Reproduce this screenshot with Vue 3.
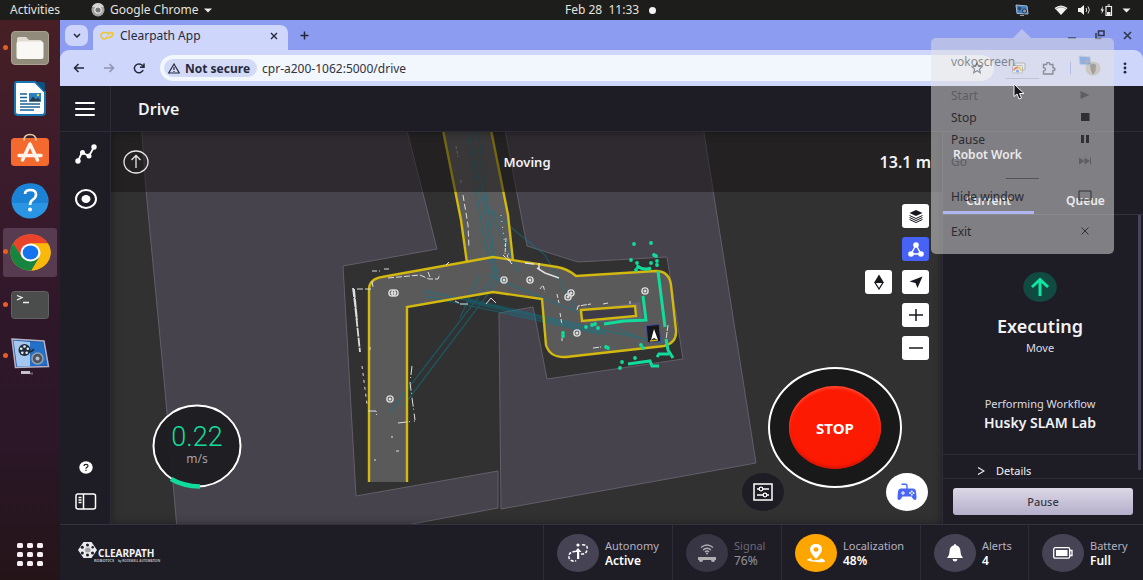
<script setup>
const dots = [
  [504, 280], [530, 280], [568, 297], [571, 293], [577, 333], [645, 291],
  [392, 293], [395, 293], [390, 399]
]
const greenDots = [
  [634, 244], [651, 243], [631, 260], [654, 255], [656, 256], [651, 263], [657, 261],
  [657, 265], [637, 263], [638, 267], [636, 270], [620, 368], [622, 362], [563, 333],
  [563, 336], [635, 358], [641, 345], [643, 348], [606, 347], [608, 348], [586, 327],
  [592, 325], [595, 324], [598, 328]
]
const menu = [
  { label: 'Start', icon: 'play', off: true },
  { label: 'Stop', icon: 'stop' },
  { label: 'Pause', icon: 'pause' },
  { label: 'Go', icon: 'skip', off: true }
]
const stats = [
  { id: 'autonomy', label: 'Autonomy', value: 'Active' },
  { id: 'signal', label: 'Signal', value: '76%' },
  { id: 'localization', label: 'Localization', value: '48%' },
  { id: 'alerts', label: 'Alerts', value: '4' },
  { id: 'battery', label: 'Battery', value: 'Full' }
]
</script>

<template>
  <div class="desktop">
    <header class="topbar">
      <button class="top-btn">Activities</button>
      <button class="top-btn app-menu">
        <svg width="14" height="14" viewBox="0 0 14 14"><circle cx="7" cy="7" r="6.5" fill="#a5a5a3" /><path d="M1 4 A6.5 6.5 0 0 1 13 4 L7 4z" fill="#d2d2d0" /><circle cx="7" cy="7" r="3.2" fill="#777" stroke="#e8e8e8" stroke-width="1.2" /></svg>
        Google Chrome
        <svg width="8" height="5" viewBox="0 0 8 5"><path d="M0 0.5h8L4 4.5z" fill="#eee" /></svg>
      </button>
      <button class="top-btn clock">Feb 28&nbsp; 11:33 <i class="notif"></i></button>
      <div class="tray">
        <svg class="tray-app" width="14" height="13" viewBox="0 0 14 13"><path d="M1 1 12 2 13 10 2 9.500z" fill="#3d7dc4" stroke="#a8bdd4" /><circle cx="4.500" cy="4.500" r="1.700" fill="#2b4766" /><circle cx="9.500" cy="7" r="2" fill="#8d9dad" stroke="#334" /><path d="M5 11.500h4" stroke="#999" /></svg>
        <svg width="14" height="10" viewBox="0 0 14 10"><path d="M7 10 0.500 3 Q7 -2.200 13.500 3z" fill="#f1f1ef" /><path d="M1.600 4.200 Q7 0 12.400 4.200" fill="none" stroke="#777" stroke-width=".6" /></svg>
        <svg width="14" height="12" viewBox="0 0 14 12"><path d="M1 4h2.500L7 1v10L3.500 8H1z" fill="#f1f1ef" /><path d="M9 4q1.500 2 0 4M11 2.500q2.800 3.500 0 7" fill="none" stroke="#ddd" /></svg>
        <svg width="13" height="12" viewBox="0 0 13 12"><path d="M3 2 0.500 6.500H2L1.500 10 4 5.500H2.500z" fill="#eee" /><path d="M6 2.500h5.500v9H6zM7.500 1h2.500" fill="none" stroke="#eee" stroke-width="1.200" /><path d="M7 8h3.500v3H7z" fill="#eee" /></svg>
        <svg width="9" height="5" viewBox="0 0 9 5"><path d="M0.500 0.500h8L4.500 4.500z" fill="#eee" /></svg>
      </div>
    </header>

    <div class="work">
      <nav class="dock" aria-label="Dock">
        <button class="dock-item running" aria-label="Files">
          <svg width="38" height="34" viewBox="0 0 38 34"><rect x=".5" y=".5" width="37" height="33" rx="3.500" fill="#918b7b" stroke="#aaa291" /><path d="M6 8q0-2 2-2h7l3 3h11q2 0 2 2v3H6z" fill="#e0dcd3" /><rect x="5.500" y="10.500" width="27" height="17.500" rx="2" fill="#faf8f4" /></svg>
        </button>
        <button class="dock-item" aria-label="Writer">
          <svg width="32" height="35" viewBox="0 0 32 35"><path d="M3 1h18l10 10v20q0 3-3 3H4q-3 0-3-3V3q0-2 2-2z" fill="#fff" stroke="#1a76b3" stroke-width="2" /><path d="M22 1h7q2 0 2 2v8z" fill="#104f7e" /><path d="M6 13h7M6 16.500h7M6 20h7M6 23h20M6 26h20M6 29h14" stroke="#1b6295" stroke-width="1.400" /><rect x="15" y="12" width="12" height="8.500" fill="#2b82c0" /><path d="M15 20.500l4-5 3 3 2-2 3 4z" fill="#263b4c" /><circle cx="24" cy="14" r="1.200" fill="#f5d35a" /></svg>
        </button>
        <button class="dock-item" aria-label="Software">
          <svg width="38" height="34" viewBox="0 0 38 34"><rect y="5" width="38" height="28" rx="3.500" fill="#f4692e" /><path d="M13 7.500q0-6 6-6t6 6" fill="none" stroke="#e3c9a8" stroke-width="1.600" /><path d="M19 11 11.500 27M19 11l7.500 16M8 22.500h22" stroke="#fff4eb" stroke-width="3.500" stroke-linecap="round" fill="none" /></svg>
        </button>
        <button class="dock-item" aria-label="Help">
          <svg width="38" height="36" viewBox="0 0 38 36"><ellipse cx="19" cy="18" rx="18.500" ry="17.500" fill="#2a95e3" /><path d="M1 20Q1 1 19 .5T37 20z" fill="#1b82d6" /><path d="M14 11q0-4 5.500-4t5.500 4.500q0 3-3 5t-3 5.500" fill="none" stroke="#fff" stroke-width="2.600" /><circle cx="19" cy="26.500" r="2" fill="#fff" /></svg>
        </button>
        <button class="dock-item running active" aria-label="Chrome">
          <svg width="41" height="37" viewBox="0 0 41 37"><ellipse cx="20.500" cy="18.500" rx="20" ry="18" fill="#f9b90c" /><path d="M3.200 9.500A20 18 0 0 1 38 9.500H20.500L12 24z" fill="#e9432c" /><path d="M3.200 9.500A20 18 0 0 0 21.500 36.500L29.500 23H12z" fill="#17843f" /><path d="M29.500 23 21.500 36.500A20 18 0 0 0 38 9.500H20.500z" fill="#f9b90c" /><ellipse cx="20.500" cy="18.500" rx="10" ry="9" fill="#fff" /><ellipse cx="20.500" cy="18.500" rx="7.800" ry="7" fill="#1473ef" /></svg>
        </button>
        <button class="dock-item running" aria-label="Terminal">
          <svg width="38" height="28" viewBox="0 0 38 28"><rect x=".5" y=".5" width="37" height="27" rx="3" fill="#4b4c4c" stroke="#626262" /><path d="M6 4.500 11 6.500 6 9M12 11.500h6" fill="none" stroke="#f0f0f0" stroke-width="1.300" /></svg>
        </button>
        <button class="dock-item running" aria-label="vokoscreen">
          <svg width="40" height="38" viewBox="0 0 40 38"><path d="M2 2 34 4 38.500 29.500 5.500 30.500z" fill="#1c5ba8" stroke="#b5b0c4" stroke-width="1.500" /><path d="M3.500 3.500 20 5v24.500L7 29.500z" fill="#a4c6ef" /><path d="M20 5 33 5.500 37 28 20 29z" fill="#2370c9" /><circle cx="14.500" cy="13" r="6" fill="#222c3a" /><g fill="#e6eef7"><circle cx="14.500" cy="9.500" r="1.300" /><circle cx="11.200" cy="11.700" r="1.300" /><circle cx="12.300" cy="15.700" r="1.300" /><circle cx="16.700" cy="15.700" r="1.300" /><circle cx="17.800" cy="11.700" r="1.300" /></g><path d="M18 15q4 0 6-3" stroke="#222c3a" stroke-width="1.500" fill="none" /><circle cx="27.500" cy="21.500" r="5.500" fill="#4b5560" stroke="#98a0ab" stroke-width="1.500" /><circle cx="27.500" cy="21.500" r="2" fill="#b9c0c8" /><path d="M11 35.500h9" stroke="#c6c2ca" stroke-width="3" /><path d="M20 36.500h3" stroke="#6d6470" stroke-width="2" /></svg>
        </button>
        <button class="dock-item grid-btn" aria-label="Show applications">
          <svg width="26" height="24" viewBox="0 0 26 24" fill="#f5eff4"><template v-for="r in 3" :key="r"><rect v-for="c in 3" :key="c" :x="(c - 1) * 10" :y="(r - 1) * 9" width="6" height="5" rx="1.500" /></template></svg>
        </button>
      </nav>

      <div class="browser">
        <div class="tabstrip">
          <button class="tab-search" aria-label="Search tabs"><svg width="8" height="5" viewBox="0 0 8 5"><path d="M1 1l3 3 3-3" fill="none" stroke="#222739" stroke-width="1.500" /></svg></button>
          <div class="tab">
            <svg width="14" height="10" viewBox="0 0 14 10"><path d="M7 1.500H3.500Q1 2 1 4.500T3.500 8h2l1-1.500h3Q13 6 12.800 2 L10 1.500 8.500 3z" fill="none" stroke="#f0c52d" stroke-width="1.600" /></svg>
            <span>Clearpath App</span>
            <button class="bare" aria-label="Close tab"><svg width="8" height="8" viewBox="0 0 8 8"><path d="M1 1l6 6M7 1 1 7" stroke="#222739" stroke-width="1.400" /></svg></button>
          </div>
          <button class="bare new-tab" aria-label="New tab"><svg width="9" height="9" viewBox="0 0 9 9"><path d="M4.500 0.500v8M.5 4.500h8" stroke="#222739" stroke-width="1.500" /></svg></button>
          <div class="win">
            <button class="bare" aria-label="Minimize"><svg width="10" height="10" viewBox="0 0 10 10"><path d="M1 8h8" stroke="#3d4567" stroke-width="1.500" /></svg></button>
            <button class="bare" aria-label="Restore"><svg width="10" height="10" viewBox="0 0 10 10"><path d="M3.500 1h5.500v4.500H3.500zM1 3v5.500h5.500" fill="none" stroke="#303651" stroke-width="1.500" /></svg></button>
            <button class="bare" aria-label="Close"><svg width="9" height="9" viewBox="0 0 9 9"><path d="M1 1l7 7M8 1 1 8" stroke="#303651" stroke-width="1.600" /></svg></button>
          </div>
        </div>
        <div class="toolbar">
          <button class="bare" aria-label="Back"><svg width="12" height="10" viewBox="0 0 12 10"><path d="M11 5H1.500M5.500 1l-4 4 4 4" fill="none" stroke="#222739" stroke-width="1.500" /></svg></button>
          <button class="bare" aria-label="Forward"><svg width="12" height="10" viewBox="0 0 12 10"><path d="M1 5h9.500M6.500 1l4 4-4 4" fill="none" stroke="#8e94ae" stroke-width="1.500" /></svg></button>
          <button class="bare" aria-label="Reload"><svg width="12" height="11" viewBox="0 0 12 11"><path d="M10.200 7A4.600 4.400 0 1 1 9.500 2.500L10.800 4M11 .5V4.200H7" fill="none" stroke="#222739" stroke-width="1.500" /></svg></button>
          <div class="omnibox">
            <button class="chip"><svg width="12" height="11" viewBox="0 0 12 11"><path d="M6 1 11.300 10H.7z" fill="none" stroke="#252a3f" stroke-width="1.200" /><path d="M6 4v3M6 8v1" stroke="#252a3f" stroke-width="1.200" /></svg>Not secure</button>
            <input aria-label="Address" value="cpr-a200-1062:5000/drive" />
            <button class="bare" aria-label="Bookmark"><svg width="12" height="12" viewBox="0 0 12 12"><path d="M6 1l1.500 3.400 3.700.3-2.800 2.400.9 3.600L6 8.800 2.700 10.700l.9-3.600L.8 4.700l3.700-.3z" fill="none" stroke="#333a55" stroke-width="1.200" /></svg></button>
          </div>
          <button class="bare screen-ext" aria-label="Screen extension"><svg width="14" height="12" viewBox="0 0 14 12"><rect x="3" y="1" width="10" height="7" rx="1" fill="#eee" stroke="#888" /><rect x=".5" y="3.500" width="10" height="7.500" rx="1" fill="#f4f4f4" stroke="#999" /><path d="M2 8.500a3.500 3.500 0 0 1 4-3" stroke="#e33d28" stroke-width="2" fill="none" /><path d="M6 5.500a3 3 0 0 1 3 3.500" stroke="#f4b400" stroke-width="2" fill="none" /><circle cx="5.500" cy="9" r="1.500" fill="#2876e8" /></svg></button>
          <button class="bare" aria-label="Extensions"><svg width="14" height="13" viewBox="0 0 14 13"><path d="M1.500 2.500h3q0-2 1.700-2t1.700 2h3v3.200q2 0 2 1.500t-2 1.500V12H1.500V9q2-.3 2-1.700T1.500 5.500z" fill="none" stroke="#333a50" stroke-width="1.400" /></svg></button>
          <i class="vsep"></i>
          <button class="bare profile" aria-label="Profile"><svg width="16" height="15" viewBox="0 0 16 15"><ellipse cx="8" cy="7.500" rx="7.500" ry="7" fill="#b5ada2" /><path d="M5 4q3-3 6 0l-.5 6-2.500 4-2-4z" fill="#635d58" /></svg></button>
          <button class="bare" aria-label="Menu"><svg width="4" height="12" viewBox="0 0 4 12" fill="#222739"><circle cx="2" cy="1.800" r="1.400" /><circle cx="2" cy="6" r="1.400" /><circle cx="2" cy="10.200" r="1.400" /></svg></button>
        </div>

        <div class="app">
          <div class="app-head">
            <button class="side-cell" aria-label="Menu"><svg width="20" height="16" viewBox="0 0 20 16"><path d="M1 2h18M1 8h18M1 14h18" stroke="#fff" stroke-width="2" stroke-linecap="round" /></svg></button>
            <h1>Drive</h1>
          </div>
          <div class="app-body">
            <nav class="side" aria-label="App">
              <button class="bare" aria-label="Paths"><svg width="22" height="20" viewBox="0 0 22 20"><path d="M3 17 7 8.500 14 12 19 3" fill="none" stroke="#fff" stroke-width="1.800" /><g fill="#fff"><circle cx="3" cy="17" r="2.700" /><circle cx="7.500" cy="8.500" r="2.500" /><circle cx="14" cy="12" r="2.500" /><circle cx="19" cy="3" r="2.700" /></g></svg></button>
              <button class="bare" aria-label="Record"><svg width="22" height="20" viewBox="0 0 22 20"><ellipse cx="11" cy="10" rx="10" ry="9" fill="none" stroke="#fff" stroke-width="2" /><ellipse cx="11" cy="10" rx="4.500" ry="4" fill="#fff" /></svg></button>
              <span class="grow"></span>
              <button class="bare help" aria-label="Help"><svg width="14" height="13" viewBox="0 0 14 13"><ellipse cx="7" cy="6.500" rx="6.700" ry="6.200" fill="#fff" /><path d="M5 5q0-1.700 2-1.700t2 1.500q0 1-1 1.500t-1 1.500M7 8.700v1.300" fill="none" stroke="#1e1d26" stroke-width="1.200" /></svg></button>
              <button class="bare" aria-label="Toggle panel"><svg width="22" height="17" viewBox="0 0 22 17"><rect x="1" y="1" width="19.500" height="15" rx="2" fill="none" stroke="#fff" stroke-width="1.500" /><path d="M8.500 1v15" stroke="#fff" stroke-width="1.500" /><path d="M3.500 4.500h3M3.500 7h3M3.500 9.500h3" stroke="#fff" stroke-width="1.300" /></svg></button>
            </nav>

            <main class="map">
              <svg class="scene" viewBox="111 132 831 392" preserveAspectRatio="xMidYMid slice">
                <g fill="#47434d" stroke="#625f6a" stroke-width="1">
                  <path d="M141 120 146 190 165 390 178 540H380L412 524 498 508V471L356 496 343 266 437 249 407 131V120z" />
                  <path d="M503 120 527 246 578 262 667 257 683 359 547 379 533 307 499 313 501 509 756 463 702 120z" />
                </g>
                <path d="M440 120 461 220 467 263 513 261 508 215 489 120z" fill="#5c5c5c" />
                <path d="M369 482V290Q369 279 382 277L493 257 557 267Q568 269 576 276L656 271Q669 271 671 285L676 330Q677 343 664 346L566 357Q550 358 546 345L542 299 493 292 407 307V482z" fill="#5a5a5a" />
                <path d="M577 311 640 302 643 318 584 323z" fill="#67636f" />
                <g fill="none" stroke="#087a90" stroke-width="1.300" opacity=".5">
                  <path d="M467 131 484 240 494 272M471 131 495 274M478 131 497 275M480 190 520 274M486 207 545 255M424 291 663 343M425 296 600 334M487 273 500 278 404 405M493 278 390 412M480 274 460 318M490 276 650 342M545 255 576 310" />
                  <path d="M466 300 606 333" stroke-width="5" opacity=".7" />
                </g>
                <g fill="none" stroke="#d2b80f" stroke-width="2.400">
                  <path d="M441 120 461 220 467 263M489 120 508 215 513 261" />
                  <path d="M369 482V290Q369 279 382 277L493 257 557 267Q568 269 576 276L656 271Q669 271 671 285L676 330Q677 343 664 346L566 357Q550 358 546 345L542 299 493 292 407 307V482" />
                  <path d="M581 310 635 306 636 316 582 321z" fill="#3f3b49" />
                </g>
                <g fill="none" stroke="#dedede" stroke-width="1">
                  <path d="M456 146 458 157M461 180v3" stroke-dasharray="3 2" opacity=".6" />
                  <path d="M463 195 468 225 469 248" stroke-dasharray="6 3" />
                  <path d="M501 215 505 246" stroke-dasharray="1 5" />
                  <path d="M503 255 512 264 507 256 509 253M506 238 505 254" stroke-dasharray="4 1" />
                  <path d="M372 271 380 271M384 269h7" stroke-dasharray="5 2" />
                  <path d="M353 288 355 304 360 352M354 289 357 320" stroke-width="1.800" stroke-dasharray="9 1" />
                  <path d="M357 289 371 289M372 281 373 287M388 278 420 275 429 279 438 279 440 274M428 272 430 277M446 265 449 262" stroke-dasharray="6 2" />
                  <path d="M362 366 367 404M370 347v3" stroke-dasharray="3 4" />
                  <path d="M368 411h8l1 6M398 423 415 421M412 366 410 383 415 420" stroke-dasharray="9 2 1 4" />
                  <path d="M391 437h2M396 451h3M374 460h2" />
                  <path d="M486 304 491 298 496 303M455 301 459 303M460 304 468 304" />
                  <path d="M537 268 545 273 559 278M539 263 539 270M525 263 534 264" stroke-width="1.500" />
                  <path d="M540 289 543 285 545 292M557 294 559 303M560 313 562 325" stroke-dasharray="4 2" />
                  <path d="M577 310 578 306 591 304M603 304 608 303M630 301v3M668 325 666 340M562 338v3M593 348l8-1" stroke-dasharray="6 1" />
                </g>
                <g fill="none" stroke="#12dc9b" stroke-width="3">
                  <path d="M658 271 665 327" />
                  <path d="M643 296 646 320 624 321 604 324" />
                  <path d="M637 266Q644 271 651 268" />
                  <path d="M666 339 668 350 673 358M657 357 659 354 669 354M628 364 650 361 652 366 659 366" />
                </g>
                <g fill="#12dc9b"><circle v-for="(p, i) in greenDots" :key="i" :cx="p[0]" :cy="p[1]" r="1.900" /></g>
                <g v-for="(p, i) in dots" :key="i" fill="none" stroke="#ddd" stroke-width="1.400"><circle :cx="p[0]" :cy="p[1]" r="3.100" /><circle :cx="p[0]" :cy="p[1]" r=".8" /></g>
                <rect x="647" y="325" width="13" height="17" fill="#17171b" stroke="#3f4f9d" transform="rotate(-5 654 334)" />
                <path d="M654 329 651 340 654 338 658 340z" fill="#fff" />
                <path d="M650 341 658 340" stroke="#d2b311" stroke-width="1.500" />
              </svg>

              <div class="strip">
                <svg width="26" height="24" viewBox="0 0 26 24"><ellipse cx="13" cy="12" rx="12" ry="11" fill="none" stroke="#e8e8e8" stroke-width="1.300" /><path d="M13 18V6M8.500 10 13 5.500 17.500 10" fill="none" stroke="#e8e8e8" stroke-width="1.300" /></svg>
                <b>Moving</b>
                <b class="dist">13.1 m</b>
              </div>

              <div class="tools">
                <button class="tool" aria-label="Layers"><svg width="16" height="14" viewBox="0 0 16 14"><path d="M8 1 14.500 4 8 7 1.500 4z" fill="#17171f" /><path d="M1.500 6.500 8 9.500l6.500-3M1.500 8.500 8 11.500l6.500-3M1.500 10.500 8 13.500l6.500-3" fill="none" stroke="#17171f" /></svg></button>
                <button class="tool on" aria-label="Graph"><svg width="16" height="15" viewBox="0 0 16 15"><path d="M8 3 3 12h10z" fill="none" stroke="#fff" stroke-width="1.400" /><g fill="#fff"><circle cx="8" cy="3" r="2.800" /><circle cx="3" cy="12" r="2.800" /><circle cx="13" cy="12" r="2.800" /></g></svg></button>
                <button class="tool compass" aria-label="Orientation"><svg width="12" height="16" viewBox="0 0 12 16"><path d="M6 0.500 10.500 8H1.500z" fill="#17171f" /><path d="M2 8.500h8L6 15z" fill="none" stroke="#17171f" stroke-width="1.200" /></svg></button>
                <button class="tool" aria-label="Locate"><svg width="14" height="12" viewBox="0 0 14 12"><path d="M13.500 .5 8.500 12 6.500 7 .5 5.500z" fill="#17171f" /></svg></button>
                <button class="tool" aria-label="Zoom in"><svg width="14" height="12" viewBox="0 0 14 12"><path d="M7 0v12M0 6h14" stroke="#17171f" stroke-width="1.500" /></svg></button>
                <button class="tool" aria-label="Zoom out"><svg width="14" height="12" viewBox="0 0 14 12"><path d="M0 6h14" stroke="#17171f" stroke-width="1.500" /></svg></button>
              </div>

              <div class="speed">
                <svg width="92" height="86" viewBox="0 0 92 86"><ellipse cx="46" cy="43" rx="43.500" ry="40.500" fill="#1d1c20" fill-opacity=".94" stroke="#fff" stroke-width="2" /><path d="M20 76Q33 83.500 49 83.500" fill="none" stroke="#0fdc9b" stroke-width="4.500" /></svg>
                <strong>0.22</strong>
                <span>m/s</span>
              </div>

              <div class="stop-ring"><button class="stop">STOP</button></div>
              <button class="round settings" aria-label="Settings"><svg width="20" height="18" viewBox="0 0 20 18"><rect x="1" y="1" width="18" height="16" fill="none" stroke="#fff" stroke-width="1.500" /><path d="M4 6h12M4 12h12" stroke="#fff" stroke-width="1.300" /><circle cx="8" cy="6" r="1.800" fill="#1e1d26" stroke="#fff" stroke-width="1.200" /><circle cx="12" cy="12" r="1.800" fill="#1e1d26" stroke="#fff" stroke-width="1.200" /></svg></button>
              <button class="round pad" aria-label="Gamepad"><svg width="20" height="18" viewBox="0 0 20 18"><path d="M4.500 1.200h4q1.500 0 1.500 2V6" fill="none" stroke="#4a66f5" stroke-width="1.400" /><path d="M4 5.500h12q2.500 0 3 3l.5 5.500q.2 3-1.500 3-1.500 0-2.500-2l-1-1.500h-9L4.500 15Q3.500 17 2 17 .3 17 .5 14L1 8.500q.5-3 3-3z" fill="#4a66f5" /><path d="M6 8v4M4 10h4" stroke="#fff" /><circle cx="13" cy="10" r=".9" fill="#fff" /><circle cx="16.500" cy="10" r=".9" fill="#fff" /><circle cx="14.800" cy="8.500" r=".9" fill="#fff" /><circle cx="14.800" cy="11.700" r=".9" fill="#fff" /></svg></button>
            </main>

            <aside class="panel">
              <h2>Robot Work</h2>
              <div class="tabs"><button class="sel">Current</button><button>Queue</button></div>
              <div class="scroll">
                <svg class="state" width="34" height="30" viewBox="0 0 34 30"><ellipse cx="17" cy="15" rx="16.800" ry="15" fill="#114a40" /><path d="M17 24V7.500M9 15l8-7.500 8 7.500" fill="none" stroke="#0fe6a3" stroke-width="3" /></svg>
                <h3>Executing</h3>
                <p class="small">Move</p>
                <p class="wf">Performing Workflow</p>
                <p class="name">Husky SLAM Lab</p>
                <button class="details"><svg width="8" height="8" viewBox="0 0 8 8"><path d="M1 .5 7 4 1 7.500" fill="none" stroke="#eee" stroke-width="1.200" /></svg>Details</button>
              </div>
              <div class="actions"><button>Pause</button></div>
            </aside>
          </div>

          <footer class="foot">
            <div class="logo">
              <svg width="90" height="24" viewBox="0 0 90 24">
                <path d="M5.500 1h8l5.500 8-5.500 8h-8L0 9z" fill="#e9e9ee" />
                <g fill="#1e1d26"><path d="M8 6.800h3.500l1.500 2.200-1.500 2.200H8L6.500 9z" opacity=".35" /><circle cx="4.300" cy="6.300" r="1.500" /><circle cx="9.500" cy="4" r="1.500" /><circle cx="14.700" cy="6.300" r="1.200" /><circle cx="4.300" cy="12" r="1.500" /><circle cx="9.500" cy="14" r="1.500" /><circle cx="14.500" cy="12" r="1.500" /></g>
                <text x="20" y="16" class="logo-name">CLEARPATH</text>
                <text x="16" y="21" class="logo-sub">ROBOTICS</text>
                <text x="40" y="21" class="logo-by">by ROCKWELL AUTOMATION</text>
              </svg>
            </div>
            <div v-for="s in stats" :key="s.id" class="stat" :class="s.id">
              <span class="disc">
                <svg v-if="s.id === 'autonomy'" width="20" height="20" viewBox="0 0 20 20"><path d="M7.500 8.500H6.500Q2 9 1 12q-.8 4 2.500 5.500T8 17.500M13 11q5 .5 6-4t-2.500-5-3.500 .5" fill="none" stroke="#fff" stroke-width="1.500" stroke-dasharray="3 1.500" /><circle cx="10" cy="2" r="1.600" fill="#fff" /><path d="M9 7h2.200v9H9zM6.500 9 10 5l3.500 4z" fill="#fff" /></svg>
                <svg v-else-if="s.id === 'signal'" width="20" height="20" viewBox="0 0 20 20"><path d="M4 4.500Q10-.5 16 4.500M6 7q4-3.500 8 0M8 9q2-2 4 0" fill="none" stroke="#fff" stroke-width="1.300" /><circle cx="10" cy="10.500" r="1" fill="#fff" /><path d="M1 14h18v3H1z" fill="#fff" /><circle cx="4" cy="17" r="2" fill="#fff" /><circle cx="16" cy="17" r="2" fill="#fff" /></svg>
                <svg v-else-if="s.id === 'localization'" width="20" height="20" viewBox="0 0 20 20"><path d="M10 16Q4 9.500 4 6.500 4 1 10 1t6 5.500Q16 9.500 10 16z" fill="#fff" /><ellipse cx="10" cy="6.500" rx="2.500" ry="2.300" fill="#ffa500" /><path d="M6 15q-5 .8-5 2t9 2 9-.8-5-3.200q2.500 1.500-4 2.200T6 15z" fill="#fff" /></svg>
                <svg v-else-if="s.id === 'alerts'" width="18" height="20" viewBox="0 0 18 20"><path d="M9 1q1 0 1 1.300 4.500 1 4.500 6.500 0 4 2.500 6.200H1q2.500-2 2.500-6.200 0-5.500 4.500-6.500Q8 1 9 1zM6.500 16h5Q11 18.500 9 18.500T6.500 16z" fill="#fff" /></svg>
                <svg v-else width="20" height="12" viewBox="0 0 20 12"><rect x=".7" y=".7" width="16" height="10.500" rx="1.500" fill="none" stroke="#fff" stroke-width="1.300" /><rect x="3" y="3" width="11.500" height="6" fill="#fff" /><path d="M17 3.500h2v5h-2" fill="none" stroke="#fff" stroke-width="1.300" /></svg>
              </span>
              <span class="stat-text"><span>{{ s.label }}</span><b>{{ s.value }}</b></span>
            </div>
          </footer>
        </div>
      </div>
    </div>

    <div class="popup" role="menu">
      <div class="pop-row title"><span>vokoscreen</span><svg width="14" height="12" viewBox="0 0 14 12"><path d="M1 1 12 2 13 10 2 9.500z" fill="#4a86d0" stroke="#aabbd0" /><circle cx="9" cy="6.500" r="2" fill="#889" /></svg></div>
      <hr />
      <button v-for="m in menu" :key="m.label" class="pop-row" :class="{ off: m.off }" role="menuitem">
        <span>{{ m.label }}</span>
        <svg width="14" height="10" viewBox="0 0 14 10" fill="#303034">
          <path v-if="m.icon === 'play'" d="M2.500 1 11.500 5 2.500 9z" />
          <path v-else-if="m.icon === 'stop'" d="M3 1h8.500v8H3z" />
          <path v-else-if="m.icon === 'pause'" d="M3 1h3v8H3zM8 1h3v8H8z" />
          <path v-else d="M1 1.500 6.500 5 1 8.500zM6.500 1.500 12 5 6.500 8.500zM12 1.500h1v7h-1z" />
        </svg>
      </button>
      <hr class="mid" />
      <button class="pop-row hide" role="menuitem"><span>Hide window</span><svg width="14" height="12" viewBox="0 0 14 12"><path d="M1 1h12v9H1z" fill="none" stroke="#303034" /></svg></button>
      <button class="pop-row exit" role="menuitem"><span>Exit</span><svg width="14" height="8" viewBox="0 0 14 8"><path d="M3.500 .5l7 7M10.500 .5l-7 7" stroke="#303034" /></svg></button>
    </div>
    <svg class="cursor" width="12" height="17" viewBox="0 0 12 17"><path d="M1 1v12.500L4 11l2 5 2.500-1-2-4.500H11z" fill="#18181c" stroke="#f4f4f4" /></svg>
  </div>
</template>

<style>
html, body { margin: 0; overflow: hidden; background: #1e1d26; }
</style>

<style scoped>
* { box-sizing: border-box; }
.desktop { position: relative; height: 100vh; display: flex; flex-direction: column; font-family: "Noto Sans", "DejaVu Sans", sans-serif; font-size: 12px; overflow: hidden; }
button { font: inherit; color: inherit; border: 0; padding: 0; background: none; display: flex; align-items: center; justify-content: center; }
svg { display: block; flex: none; }
h1, h2, h3, p { margin: 0; }
.topbar { position: relative; flex: 0 0 20px; display: flex; align-items: center; padding: 0 12px 0 10px; background: #1d1d1b; color: #e4e2df; line-height: 16px; }
.app-menu { gap: 5px; margin-left: 31px; }
.clock { position: absolute; left: 565px; gap: 10px; }
.notif { width: 7px; height: 7px; border-radius: 50%; background: #f4f4f4; }
.tray { margin-left: auto; display: flex; align-items: center; gap: 9px; }
.tray-app { margin-right: 16px; }

.work { flex: 1; min-height: 0; display: flex; }
.dock { flex: 0 0 60px; display: flex; flex-direction: column; align-items: center; gap: 4px; padding: 4px 0 2px; background: linear-gradient(#471f24, #3c1c2c 25%, #2e1729 55%, #2b1728 75%, #241418); }
.dock-item { position: relative; width: 54px; height: 47px; border-radius: 3px; flex: none; }
.dock-item.active { height: 49px; background: #573b50; }
.running::before { content: ""; position: absolute; left: 0; top: 21px; width: 5px; height: 5px; border-radius: 50%; background: #ea5b25; }
.grid-btn { margin-top: auto; }

.browser { flex: 1; min-width: 0; display: flex; flex-direction: column; background: #8c9cf0; color: #252a3d; }
.tabstrip { flex: 0 0 30px; display: flex; align-items: flex-end; padding: 0 10px 0 5px; }
.tab-search { width: 23px; height: 21px; border-radius: 7px; background: #ccd4fb; margin-bottom: 4px; }
.tab { width: 195px; height: 25px; margin-left: 5px; padding: 0 10px 4px 7px; display: flex; align-items: center; gap: 6px; border-radius: 8px 8px 0 0; background: #ced6fb; }
.tab span { flex: 1; }
.new-tab { margin: 0 0 10px 12px; }
.win { margin-left: auto; display: flex; gap: 18px; margin-bottom: 10px; padding-right: 1px; }
.toolbar { flex: 0 0 36px; display: flex; align-items: center; padding: 0 16px 0 13px; background: #ced6fb; border-radius: 9px 9px 0 0; gap: 18px; }
.omnibox { flex: 1; height: 26px; margin-left: -3px; padding: 0 11px 0 4px; display: flex; align-items: center; border-radius: 13px; background: #f2f6fd; }
.chip { height: 18px; padding: 0 7px 0 4px; gap: 5px; border-radius: 9px; background: #d3daf8; font-weight: 700; }
.omnibox input { flex: 1; min-width: 0; padding: 0 5px; border: 0; background: none; font: inherit; color: #30343f; outline: 0; }
.screen-ext { margin-right: -2px; }
.vsep { width: 1px; height: 12px; background: #8797e8; margin: 0 -4px; }
.profile { margin-right: 4px; }

.app { flex: 1; min-height: 0; display: flex; flex-direction: column; background: #1e1d26; color: #f2f2f4; }
.app-head { flex: 0 0 46px; display: flex; align-items: center; border-bottom: 1px solid #2c2a36; }
.side-cell { width: 51px; height: 45px; border-right: 1px solid #2c2a36; }
.app-head h1 { margin-left: 27px; font-size: 16px; line-height: 24px; font-weight: 600; }
.app-body { flex: 1; min-height: 0; display: flex; }
.side { flex: 0 0 51px; display: flex; flex-direction: column; align-items: center; gap: 25px; padding: 12px 0 14px 1px; border-right: 1px solid #2c2a36; }
.grow { flex: 1; }
.side .help { margin-bottom: -6px; }
.map { position: relative; flex: 1; min-width: 0; overflow: hidden; background: #313131; }
.scene { position: absolute; width: 100%; height: 100%; }
.map::after { content: ""; position: absolute; inset: 0; box-shadow: inset 0 0 8px rgba(0, 0, 0, .4); pointer-events: none; }
.strip { position: absolute; inset: 0 0 auto; height: 60px; display: grid; grid-template-columns: 1fr auto 1fr; align-items: center; padding: 0 11px 0 12px; background: rgba(22, 18, 20, .5); font-size: 13px; }
.strip b { font-weight: 600; }
.strip .dist { font-size: 16px; justify-self: end; }
.tools { position: absolute; right: 13px; top: 72px; display: grid; grid-template-columns: 27px 27px; gap: 9px 10px; }
.tool { grid-column: 2; height: 24px; border-radius: 3px; background: #fff; }
.tool.on { background: #4763f6; }
.tool.compass { grid-column: 1; grid-row: 3; }
.speed { position: absolute; left: 40px; bottom: 35px; width: 92px; height: 86px; display: flex; flex-direction: column; align-items: center; padding-top: 20px; }
.speed svg { position: absolute; inset: 0; }
.speed strong { position: relative; font: 300 27px/28px Roboto, "Noto Sans", sans-serif; color: #12dc9b; }
.speed span { position: relative; line-height: 16px; color: #a3a1a8; }
.stop-ring { position: absolute; right: 40px; bottom: 36px; width: 134px; height: 121px; padding: 17px 19px; border: 2px solid #fff; border-radius: 50%; background: #19191a; }
.stop { width: 100%; height: 100%; border-radius: 50%; background: #fd1a02; box-shadow: inset 0 2px 3px #ff4a36, inset 0 -2px 3px #d31402; font-size: 15px; font-weight: 700; color: #fff; }
.round { position: absolute; bottom: 13px; width: 42px; height: 38px; border-radius: 50%; }
.settings { right: 158px; background: #1e1d26; }
.pad { right: 14px; background: #fff; }

.panel { flex: 0 0 201px; display: flex; flex-direction: column; border-left: 1px solid #2c2a36; background: #1e1d26; }
.panel h2 { padding: 14px 10px 0; font-size: 12px; line-height: 18px; font-weight: 600; }
.tabs { display: flex; margin-top: 20px; border-bottom: 1px solid #33313e; }
.tabs button { flex: 0 0 91px; height: 30px; padding-top: 6px; font-weight: 600; border-bottom: 3px solid transparent; }
.tabs button + button { margin-left: 6px; }
.tabs .sel { border-color: #7e8aff; }
.scroll { position: relative; flex: 1; min-height: 0; overflow: hidden; display: flex; flex-direction: column; align-items: center; padding-right: 6px; }
.scroll::after { content: ""; position: absolute; right: 2px; top: 0; bottom: 8px; width: 3px; background: #48445a; }
.state { margin-top: 57px; }
.scroll h3 { margin-top: 12px; font-size: 18px; line-height: 24px; font-weight: 600; }
.small { font-size: 11px; line-height: 16px; margin-top: 2px; color: #dddce2; }
.wf { margin-top: 40px; font-size: 11px; line-height: 16px; color: #dddce2; }
.name { margin-top: 2px; font-size: 14px; line-height: 18px; font-weight: 600; }
.details { flex: none; align-self: stretch; margin-top: 22px; padding: 7px 34px 0; gap: 11px; justify-content: flex-start; border-top: 1px solid #2c2a36; font-size: 11px; line-height: 17px; }
.actions { border-top: 1px solid #2c2a36; padding: 9px 10px 9px 10px; background: #1e1d26; }
.actions button { width: 100%; height: 27px; border-radius: 3px; background: linear-gradient(#dcd8e6, #b5aecb); color: #3b3947; font-size: 11px; font-weight: 500; }

.foot { flex: 0 0 56px; display: grid; grid-template-columns: 1fr 129px 109px 139px 108px 115px; border-top: 1px solid #34323f; }
.logo { display: flex; align-items: center; padding-left: 18px; }
.logo-name { font: 700 10px "Noto Sans", sans-serif; fill: #f2f2f4; }
.logo-sub { font: 700 4px "Noto Sans", sans-serif; fill: #bbb; }
.logo-by { font: 700 3px "Noto Sans", sans-serif; fill: #bbb; }
.stat { display: flex; align-items: center; gap: 6px; padding-left: 13px; border-left: 1px solid #2e2c38; }
.disc { flex: none; width: 42px; height: 38px; border-radius: 50%; display: grid; place-items: center; background: #464355; }
.stat-text { display: flex; flex-direction: column; font-size: 11px; line-height: 15px; color: #b4b1c0; }
.stat-text b { font-size: 12px; font-weight: 600; color: #fff; }
.localization .disc { background: #ffa500; }
.signal > * { opacity: .65; }
.signal .stat-text { opacity: .5; }
.signal b { font-weight: 400; }

.popup { position: absolute; right: 29px; top: 38px; width: 183px; height: 216px; padding-top: 12px; border-radius: 5px; background: rgba(225, 225, 225, .5); color: #2b2b30; }
.popup::before { content: ""; position: absolute; left: 82px; top: -9px; border: solid transparent; border-width: 0 9px 9px; border-bottom-color: rgba(225, 225, 235, .5); }
.pop-row { width: 100%; height: 22px; padding: 0 22px 0 20px; display: flex; justify-content: space-between; align-items: center; }
.title { opacity: .5; }
.off { opacity: .4; }
hr { width: 33px; margin: 6px auto 5px; border: 0; border-top: 1px solid rgba(60, 60, 70, .15); }
hr.mid { margin: 6px auto; border-color: rgba(40, 40, 45, .5); }
.exit { margin-top: 13px; }
.cursor { position: absolute; right: 118px; top: 83px; }
</style>
